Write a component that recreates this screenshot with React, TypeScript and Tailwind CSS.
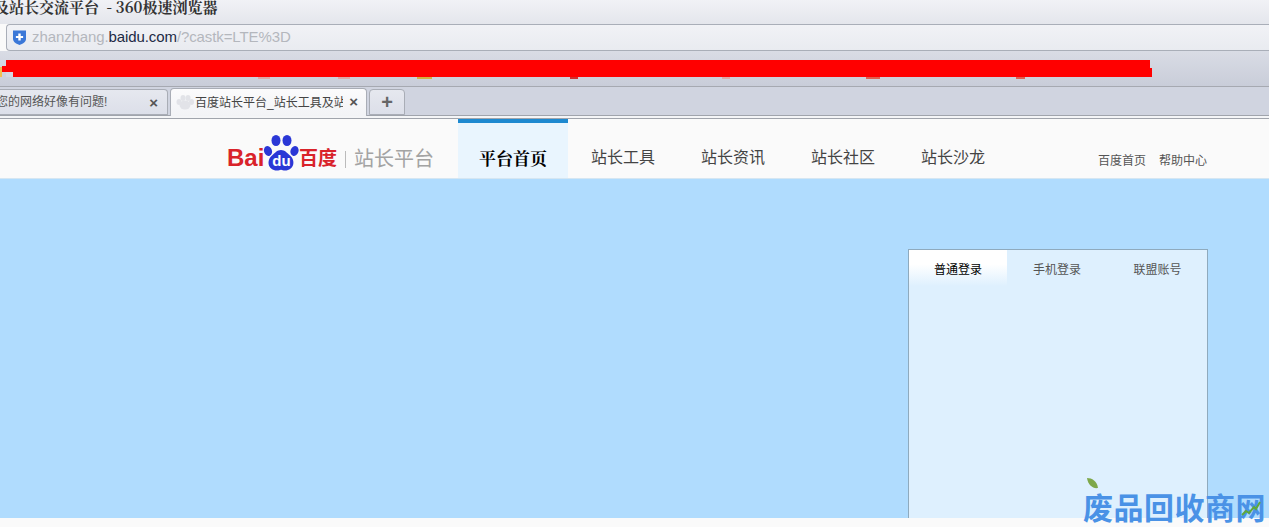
const cjk = "font-['Liberation_Sans','Noto_Sans_CJK_SC',sans-serif]";
const serifCjk = "font-['Noto_Serif_CJK_SC','Noto_Sans_CJK_SC',sans-serif]";

const navItems = ['站长工具', '站长资讯', '站长社区', '站长沙龙'];

// bits of the page text that stick out under the red censor bar
const redBarScraps = [
  { left: 252, width: 12, color: 'bg-[#dca8a8]' },
  { left: 332, width: 12, color: 'bg-[#dca8a8]' },
  { left: 411, width: 15, color: 'bg-[#d4b040]' },
  { left: 564, width: 8, color: 'bg-[#d03030]' },
  { left: 716, width: 8, color: 'bg-[#dca8a8]' },
  { left: 860, width: 14, color: 'bg-[#e06050]' },
  { left: 1010, width: 9, color: 'bg-[#e06050]' },
];

function ShieldIcon() {
  return (
    <svg width="15" height="17" viewBox="0 0 15 17">
      <path d="M1 1.500h13v8.500c0 3-3.500 5-6.500 6C4.500 15 1 13 1 10z" fill="#3b78d8" />
      <path d="M6.300 4.500h2.400v2.400h2.400v2.200H8.700v2.400H6.300V9.100H3.900V6.900h2.400z" fill="#fff" />
    </svg>
  );
}

function PawIcon() {
  return (
    <svg width="37" height="38" viewBox="0 0 37 38">
      <g fill="#2a37d6">
        <ellipse cx="6" cy="17" rx="4" ry="5" transform="rotate(-20 6 17)" />
        <ellipse cx="14" cy="6.500" rx="4.500" ry="5.500" />
        <ellipse cx="25" cy="6.500" rx="4.500" ry="5.500" />
        <ellipse cx="32.500" cy="17" rx="4" ry="5" transform="rotate(20 32.500 17)" />
        <path d="M19 16c4 0 6 3 9 5.500 6 5 4 15-5 15-2 0-2.500-.8-4-.8s-2 .8-4 .8c-9 0-11-10-5-15 3-2.500 5-5.500 9-5.500z" />
      </g>
      <text x="19.500" y="32" textAnchor="middle" fontSize="15" fontWeight="700" fill="#fff" fontFamily="Liberation Sans, sans-serif">
        du
      </text>
    </svg>
  );
}

function PawFavicon() {
  return (
    <svg className="shrink-0" width="18" height="15" viewBox="0 0 18 15">
      <g fill="#e2e3e8">
        <ellipse cx="3" cy="7" rx="2.500" ry="3" />
        <ellipse cx="7" cy="3" rx="2.500" ry="3" />
        <ellipse cx="12" cy="3" rx="2.500" ry="3" />
        <ellipse cx="15.500" cy="7" rx="2.500" ry="3" />
        <ellipse cx="9" cy="10" rx="5.500" ry="4.500" />
      </g>
    </svg>
  );
}

function TabClose() {
  return <span className="text-[15px] leading-none font-bold text-[#555]">×</span>;
}

export default function App() {
  return (
    <div className={`relative h-[527px] w-[1269px] overflow-hidden bg-[#fafafa] ${cjk}`}>
      {/* browser chrome */}
      <div className="h-[119px]">
        <div className={`h-6 overflow-hidden bg-gradient-to-b from-[#f1f2f6] to-[#e4e6ec] text-[15px] leading-[13px] font-bold whitespace-nowrap text-[#333] ${serifCjk}`}>
          <span className="ml-[-6px]">及站长交流平台 &nbsp;- 360极速浏览器</span>
        </div>
        <div className="ml-[6px] flex h-[27px] items-center gap-[5px] rounded-l-[4px] border-y border-l border-[#a9aeb8] bg-gradient-to-b from-[#f1f2f6] to-[#e9ebf0] pl-[5px] text-[15px] tracking-[-0.1px] text-[#b4b7bd]">
          <ShieldIcon />
          <span>
            zhanzhang.<span className="text-[#1c2a44]">baidu.com</span>/?castk=LTE%3D
          </span>
        </div>
        <div className="h-[36px] border-b border-[#a6a9b1] bg-gradient-to-b from-[#d9dce5] to-[#c9cdd9] pt-[9px]">
          <div className="relative ml-[6px] h-[17px] w-[1144px] bg-[#ff0000]">
            <span className="absolute top-[6px] left-[-4px] h-[6px] w-[4px] bg-[#ff0000]" />
            <span className="absolute top-[7px] left-[-6px] h-[10px] w-[2px] bg-[#f2c050]" />
            <span className="absolute top-[12px] left-0 h-[5px] w-[7px] bg-[#d5d8e2]" />
            <span className="absolute top-[8px] right-[-2px] h-[9px] w-[2px] bg-[#ff0000]" />
            {redBarScraps.map((scrap) => (
              <span
                key={scrap.left}
                className={`absolute top-[17px] h-[2px] ${scrap.color}`}
                style={{ left: scrap.left, width: scrap.width }}
              />
            ))}
          </div>
        </div>
        <div className="flex h-[32px] items-end border-b border-[#a0a4ac] bg-[#d0d4e0] text-[12px] text-[#555]">
          <div className="flex-1 self-stretch">
            <div className="flex h-[29px] items-end border-b border-[#a0a4ac]">
              <div className="flex h-[26px] w-[168px] items-center justify-between overflow-hidden rounded-tr-[4px] border border-l-0 border-[#a9adb6] bg-gradient-to-b from-[#e6e8ef] to-[#dcdfe9] pr-[9px] whitespace-nowrap">
                <span className="ml-[-4px]">您的网络好像有问题!</span>
                <TabClose />
              </div>
              <div className="mb-[-1px] ml-[2px] flex h-[28px] w-[197px] items-center rounded-t-[4px] border border-b-0 border-[#a9adb6] bg-gradient-to-b from-[#fbfbfc] to-[#f2f3f6] pr-[8px] pl-[5px] whitespace-nowrap">
                <PawFavicon />
                <span className="ml-[1px] w-[148px] overflow-hidden text-[#444]">百度站长平台_站长工具及站</span>
                <span className="ml-auto">
                  <TabClose />
                </span>
              </div>
              <div className="ml-[2px] flex h-[26px] w-[36px] items-center justify-center rounded-t-[4px] border border-[#a9adb6] bg-gradient-to-b from-[#e6e8ef] to-[#dcdfe9] text-[20px] leading-none font-bold text-[#666]">
                +
              </div>
            </div>
            <div className="h-[2px] bg-[#f4f5f7]" />
          </div>
        </div>
      </div>

      {/* site header */}
      <div className="flex h-[59px] items-stretch">
        <div className="ml-[227px] flex w-[231px] items-end pb-[7px]">
          <span className="w-[35px] text-[24px] leading-[26px] font-bold whitespace-nowrap text-[#d9232a]">Bai</span>
          <div className="mb-[-1px]">
            <PawIcon />
          </div>
          <span className="text-[19px] leading-[24px] font-bold text-[#d9232a]">百度</span>
          <span className="mx-[8px] mb-[3px] h-[17px] w-px bg-[#bbb]" />
          <span className="text-[20px] leading-[24px] text-[#a3a3a3]">站长平台</span>
        </div>
        <div className={`flex w-[110px] items-center justify-center border-t-4 border-[#1d89d0] bg-[#e9f5fe] pt-[14px] text-[17px] font-bold text-black ${serifCjk}`}>
          平台首页
        </div>
        {navItems.map((item) => (
          <div key={item} className="flex w-[110px] items-center justify-center pt-[18px] text-[16px] text-[#444]">
            {item}
          </div>
        ))}
        <div className="mr-[62px] ml-auto flex items-end gap-[13px] pb-[8px] text-[12px] text-[#555]">
          <span>百度首页</span>
          <span>帮助中心</span>
        </div>
      </div>

      {/* hero */}
      <div className="flex h-[340px] justify-end overflow-hidden border-t border-[#d5e6f2] bg-[#b0dcfe] pt-[70px] pr-[61px]">
        <div className="h-[300px] w-[300px] border border-[#8faabd] bg-[#def0fe]">
          <div className="flex text-[12px] text-[#555]">
            <div className="flex h-[36px] w-[98px] justify-center bg-gradient-to-b from-white from-40% to-[#def0fe] pt-[11px] text-black">
              普通登录
            </div>
            <div className="flex w-[100px] justify-center pt-[11px]">手机登录</div>
            <div className="flex w-[100px] justify-center pt-[11px] pl-[1px]">联盟账号</div>
          </div>
        </div>
      </div>

      {/* watermark */}
      <div className="absolute right-[3px] bottom-[3px] flex items-end text-[30px] leading-[31px] font-bold tracking-[0.5px] text-[#4a92e6]">
        废品回收商网
        <svg className="absolute right-[5px] bottom-[6px]" width="20" height="18" viewBox="0 0 20 18" fill="none">
          <path d="M1 15l4-4 3 2 5-6 2 2 4-7" stroke="#5fa83c" strokeWidth="2" />
        </svg>
        <svg className="absolute top-[-16px] left-[3px]" width="13" height="13" viewBox="0 0 13 13">
          <path d="M1 1c5 0 10 3 11 10C7 12 2 8 1 1z" fill="#7ea84a" />
        </svg>
      </div>
    </div>
  );
}
